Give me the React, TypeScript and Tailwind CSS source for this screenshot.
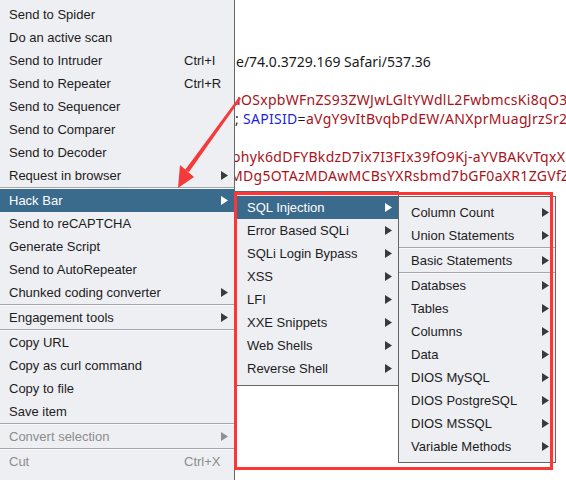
import React from 'react';

type Item =
  | 'sep'
  | { label: string; sc?: string; sub?: boolean; active?: boolean; disabled?: boolean };

const mainItems: Item[] = [
  { label: 'Send to Spider' },
  { label: 'Do an active scan' },
  { label: 'Send to Intruder', sc: 'Ctrl+I' },
  { label: 'Send to Repeater', sc: 'Ctrl+R' },
  { label: 'Send to Sequencer' },
  { label: 'Send to Comparer' },
  { label: 'Send to Decoder' },
  { label: 'Request in browser', sub: true },
  'sep',
  { label: 'Hack Bar', sub: true, active: true },
  { label: 'Send to reCAPTCHA' },
  { label: 'Generate Script' },
  { label: 'Send to AutoRepeater' },
  { label: 'Chunked coding converter', sub: true },
  'sep',
  { label: 'Engagement tools', sub: true },
  'sep',
  { label: 'Copy URL' },
  { label: 'Copy as curl command' },
  { label: 'Copy to file' },
  { label: 'Save item' },
  'sep',
  { label: 'Convert selection', sub: true, disabled: true },
  'sep',
  { label: 'Cut', sc: 'Ctrl+X', disabled: true },
  { label: 'Copy', sc: 'Ctrl+C', disabled: true },
];

const hackBarItems: Item[] = [
  { label: 'SQL Injection', sub: true, active: true },
  { label: 'Error Based SQLi', sub: true },
  { label: 'SQLi Login Bypass', sub: true },
  { label: 'XSS', sub: true },
  { label: 'LFI', sub: true },
  { label: 'XXE Snippets', sub: true },
  { label: 'Web Shells', sub: true },
  { label: 'Reverse Shell', sub: true },
];

const sqlItems: Item[] = [
  { label: 'Column Count', sub: true },
  { label: 'Union Statements', sub: true },
  'sep',
  { label: 'Basic Statements', sub: true },
  'sep',
  { label: 'Databses', sub: true },
  { label: 'Tables', sub: true },
  { label: 'Columns', sub: true },
  { label: 'Data', sub: true },
  { label: 'DIOS MySQL', sub: true },
  { label: 'DIOS PostgreSQL', sub: true },
  { label: 'DIOS MSSQL', sub: true },
  { label: 'Variable Methods', sub: true },
];

const Arrow = ({ color }: { color: string }) => (
  <svg width="7" height="9" viewBox="0 0 7 9" className="shrink-0">
    <polygon points="0,0 7,4.5 0,9" fill={color} />
  </svg>
);

const MenuList = ({ items, pl, labelW }: { items: Item[]; pl: string; labelW?: string }) => (
  <>
    {items.map((it, i) => {
      if (it === 'sep') {
        return <div key={i} className="h-[2px] border-t border-[#a4a4aa] bg-[#f8f8fa]" />;
      }
      const txt = it.active ? 'text-white' : it.disabled ? 'text-[#8c8c8c]' : 'text-[#1c1c1c]';
      const arrowColor = it.active ? '#ffffff' : it.disabled ? '#909090' : '#3a3a3a';
      return (
        <div
          key={i}
          className={`flex items-center h-[23px] pr-[6px] whitespace-nowrap ${pl} ${it.active ? 'bg-[#3a6a8c]' : ''} ${txt}`}
        >
          <span className={labelW ?? 'flex-1'}>{it.label}</span>
          {labelW && <span className="flex-1">{it.sc}</span>}
          {it.sub && <Arrow color={arrowColor} />}
        </div>
      );
    })}
  </>
);

export default function App() {
  return (
    <div className="relative w-[566px] h-[480px] overflow-hidden bg-white font-['Liberation_Sans',Arial,sans-serif] text-[13px]">
      {/* message editor behind the menus */}
      <div className="flex flex-col pt-[52px] text-[14px] leading-[19px] whitespace-nowrap font-['Noto_Sans',sans-serif]">
        <div className="pl-[236px] text-[#1a1a1a]">e/74.0.3729.169 Safari/537.36</div>
        <div className="h-[19px]" />
        <div className="pl-[232px] text-[#a8121a] tracking-[0.3px]">uOSxpbWFnZS93ZWJwLGltYWdlL2FwbmcsKi8qO3</div>
        <div className="pl-[235px] tracking-[0.3px]">
          <span className="text-[#1a1a1a]">; </span>
          <span className="text-[#1f1fe0]">SAPISID</span>
          <span className="text-[#1a1a1a]">=</span>
          <span className="text-[#a8121a]">aVgY9vItBvqbPdEW/ANXprMuagJrzSr2</span>
        </div>
        <div className="h-[19px]" />
        <div className="pl-[232px] text-[#a8121a] tracking-[0.3px]">ohyk6dDFYBkdzD7ix7I3FIx39fO9Kj-aYVBAKvTqxXU</div>
        <div className="pl-[230px] text-[#a8121a] tracking-[0.3px]">MDg5OTAzMDAwMCBsYXRsbmd7bGF0aXR1ZGVfZ</div>
      </div>

      {/* main context menu */}
      <div className="absolute left-0 top-0 w-[235px] pt-[3px] bg-[#eeeff3] border-r border-[#666666]">
        <MenuList items={mainItems} pl="pl-[9px]" labelW="w-[175px]" />
      </div>

      {/* Hack Bar submenu */}
      <div className="absolute left-[235px] top-[191px] w-[164px] pt-[4px] pb-[5px] bg-[#eeeff3] border border-[#646464]">
        <MenuList items={hackBarItems} pl="pl-[11px]" />
      </div>

      {/* SQL Injection submenu */}
      <div className="absolute left-[398px] top-[196px] w-[158px] pt-[4px] pb-[4px] bg-[#eeeff3] border border-[#646464]">
        <MenuList items={sqlItems} pl="pl-[12px]" />
      </div>

      {/* annotation box */}
      <div className="absolute left-[234px] top-[192px] w-[319px] h-[278px] border-[3px] border-[#ff3434]" />

      {/* annotation arrow */}
      <svg className="absolute left-0 top-0 pointer-events-none" width="566" height="480">
        <polygon points="239,97 241,98.5 189,172 185,170" fill="#f43a3a" />
        <polygon points="178,188 180,165 194,177" fill="#f43a3a" />
      </svg>
    </div>
  );
}
